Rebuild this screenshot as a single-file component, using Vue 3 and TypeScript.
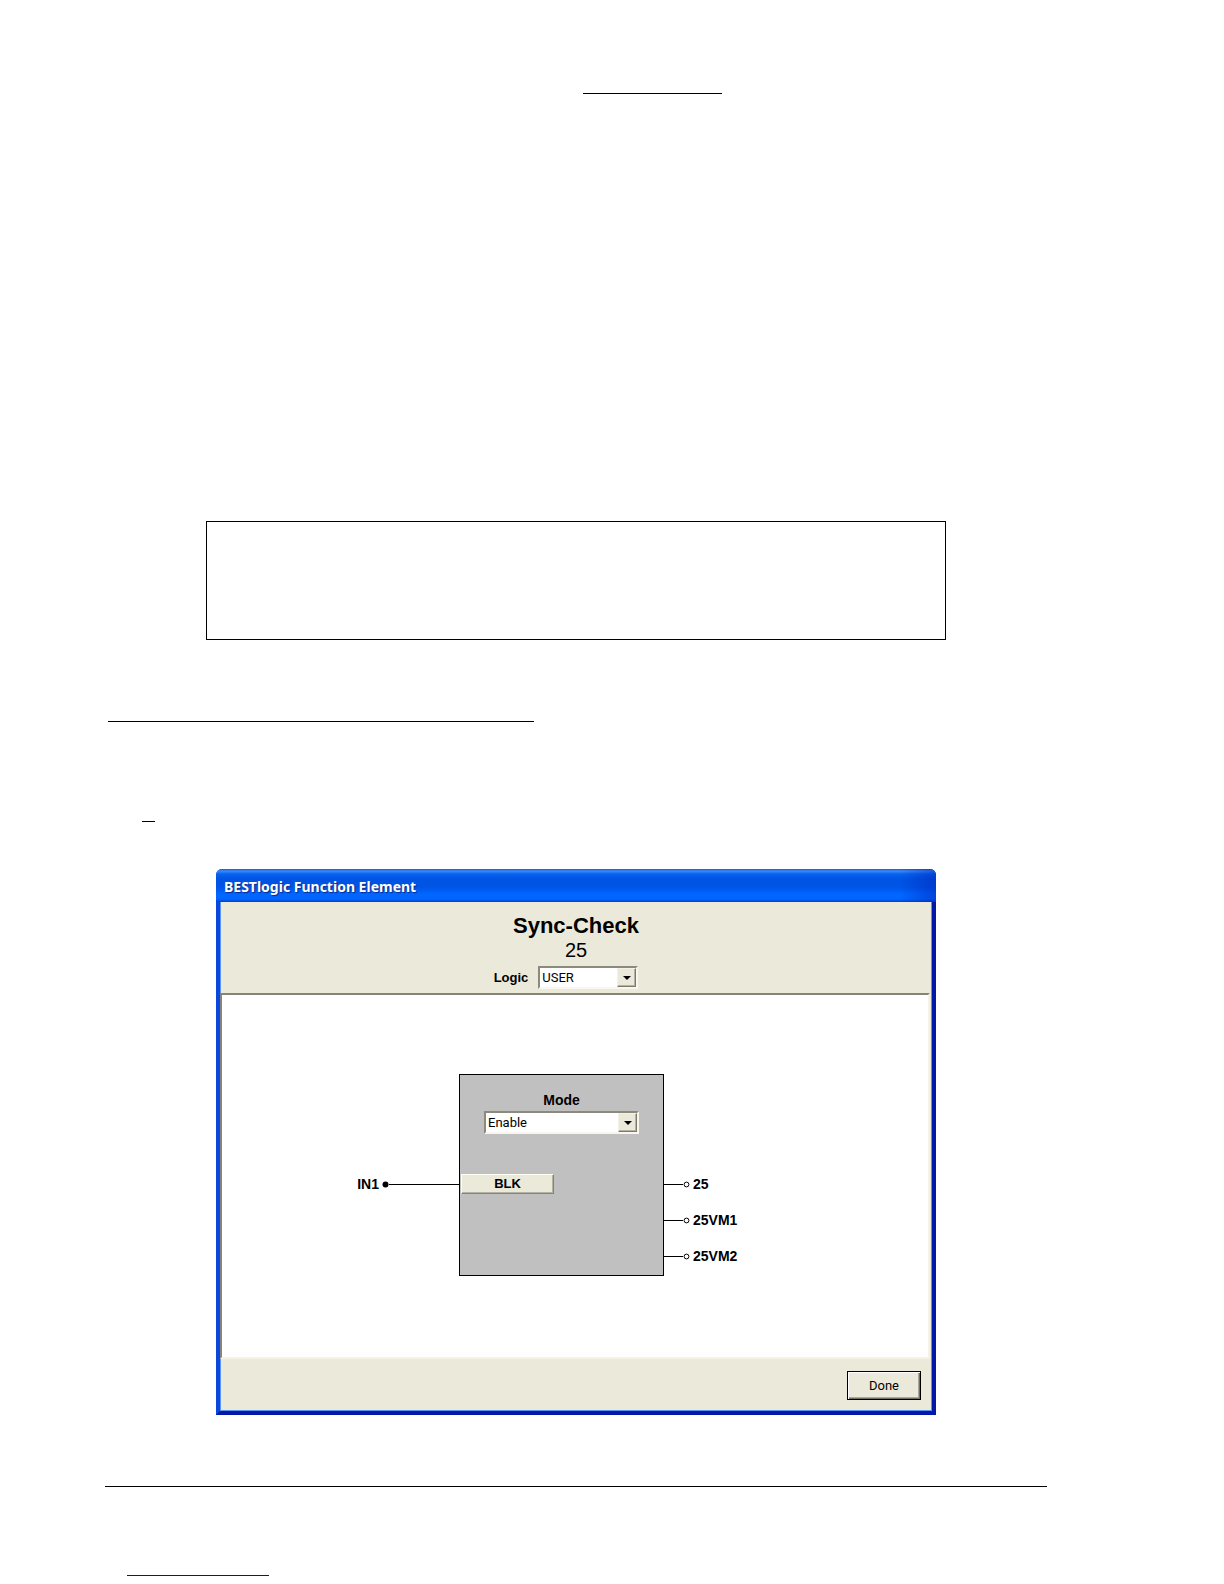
<script setup lang="ts">
import { ref } from 'vue'

const logic = ref<string>('USER')
const mode = ref<string>('Enable')
const logicOptions: string[] = ['USER', 'NONE']
const modeOptions: string[] = ['Enable', 'Disable']
const outputs: string[] = ['25', '25VM1', '25VM2']
</script>

<template>
  <main class="page">
    <div class="rule rule-top"></div>
    <div class="note"></div>
    <div class="rule rule-heading"></div>
    <div class="rule rule-mark"></div>

    <section class="window">
      <header class="titlebar">BESTlogic Function Element</header>
      <div class="head">
        <h1>Sync-Check</h1>
        <p class="number">25</p>
        <div class="logic-row">
          <label for="logic">Logic</label>
          <span class="combo combo-logic">
            <select id="logic" v-model="logic">
              <option v-for="o in logicOptions" :key="o">{{ o }}</option>
            </select>
            <span class="drop"><svg width="8" height="4" viewBox="0 0 8 4"><path d="M0 0H8L4 4Z" /></svg></span>
          </span>
        </div>
      </div>

      <div class="canvas">
        <div class="inputs">
          <span>IN1</span>
          <svg class="dot" width="7" height="7" viewBox="0 0 7 7"><circle cx="3.5" cy="3.5" r="3" /></svg>
          <i class="wire wire-in"></i>
        </div>
        <div class="block">
          <label for="mode">Mode</label>
          <span class="combo combo-mode">
            <select id="mode" v-model="mode">
              <option v-for="o in modeOptions" :key="o">{{ o }}</option>
            </select>
            <span class="drop"><svg width="8" height="4" viewBox="0 0 8 4"><path d="M0 0H8L4 4Z" /></svg></span>
          </span>
          <button type="button" class="blk">BLK</button>
        </div>
        <ul class="outputs">
          <li v-for="name in outputs" :key="name">
            <i class="wire wire-out"></i>
            <svg width="7" height="7" viewBox="0 0 7 7"><circle class="ring" cx="3.5" cy="3.5" r="2.4" /></svg>
            <span class="out-name">{{ name }}</span>
          </li>
        </ul>
      </div>

      <footer class="foot">
        <button type="button" class="done">Done</button>
      </footer>
    </section>

    <div class="rule rule-footer"></div>
    <div class="rule rule-link"></div>
  </main>
</template>

<style>
body {
  background: #fff;
}
</style>

<style scoped>
* {
  box-sizing: border-box;
}
.page {
  display: flex;
  flex-direction: column;
  padding: 93px 177px 8px 105px;
  color: #000;
  font: bold 13px/16px "Liberation Sans", Arial, sans-serif;
}
.rule {
  height: 1px;
  background: #000;
}
.rule-top {
  width: 139px;
  margin-left: 478px;
}
.note {
  height: 119px;
  margin: 427px 101px 0;
  border: 1px solid #000;
}
.rule-heading {
  width: 426px;
  margin: 81px 0 0 3px;
}
.rule-mark {
  width: 13px;
  margin: 99px 0 0 37px;
}
.rule-footer {
  margin-top: 71px;
}
.rule-link {
  width: 142px;
  margin: 88px 0 0 22px;
  background: #10108c;
}
.window {
  margin: 47px 111px 0;
  border: 4px solid;
  border-color: #0a50dc #0218a8 #0218a8 #0a48dc;
  border-top: 0;
  border-radius: 6px 6px 0 0;
  background: #ebe9d9;
  box-shadow: inset 1px -1px 0 #5a94f0, inset -1px 0 0 #5a94f0;
}
.titlebar {
  height: 33px;
  margin: 0 -4px;
  padding: 0 8px;
  border-radius: 6px 6px 0 0;
  background:
    linear-gradient(to right, transparent calc(100% - 36px), rgba(0, 30, 180, 0.45)),
    linear-gradient(#1658c8 0, #3a8cfa 2px, #0a62ee 5px, #0054e3 10px, #0054e6 18px, #0066ff 25px, #0066ff 30px, #0040cc 33px);
  color: #fff;
  font: bold 14px/36px "Noto Sans", sans-serif;
  text-shadow: 1px 1px 1px #0a2a8c;
}
.head {
  display: flex;
  flex-direction: column;
  align-items: center;
  height: 91px;
  padding-top: 11px;
}
h1 {
  margin: 0;
  font-size: 22px;
  line-height: 26px;
}
.number {
  margin: 0;
  font-size: 20px;
  font-weight: normal;
  line-height: 23px;
}
.logic-row {
  display: flex;
  align-items: center;
  gap: 10px;
  margin-top: 4px;
  padding-right: 20px;
}
.combo {
  display: flex;
  position: relative;
  height: 23px;
  border: 2px solid;
  border-color: #8c8a7c #f8f6ee #f8f6ee #8c8a7c;
  background: #fff;
}
.combo-logic {
  width: 100px;
}
.combo-mode {
  width: 155px;
}
select {
  flex: 1;
  min-width: 0;
  padding: 0 20px 0 2px;
  border: 0;
  background: none;
  appearance: none;
  color: #000;
  font: 13px/18px Roboto, sans-serif;
}
.drop {
  display: flex;
  position: absolute;
  top: 0;
  right: 0;
  bottom: 0;
  align-items: center;
  justify-content: center;
  width: 19px;
  border: 1px solid;
  border-color: #f4f2e6 #7c7a6c #7c7a6c #f4f2e6;
  background: #ebe9d9;
  box-shadow: inset -1px -1px 0 #b4b2a2;
  pointer-events: none;
}
.canvas {
  display: flex;
  height: 366px;
  padding: 79px 27px 0 0;
  border: 2px solid;
  border-color: #85837a #f6f2e4 #f6f2e4 #85837a;
  margin-right: 2px;
  background: #fff;
  font-size: 14px;
}
.inputs {
  display: flex;
  flex: 1;
  align-items: center;
  justify-content: flex-end;
  height: 16px;
  margin-top: 102px;
}
.dot {
  margin-left: 3px;
}
.wire {
  height: 1px;
  background: #000;
}
.wire-in {
  width: 70px;
}
.wire-out {
  width: 19px;
}
.block {
  display: flex;
  flex-direction: column;
  align-items: center;
  width: 205px;
  height: 202px;
  padding-top: 17px;
  border: 1px solid #000;
  background: #c0c0c0;
}
.block .combo {
  margin-top: 3px;
}
.blk {
  align-self: flex-start;
  width: 93px;
  height: 20px;
  margin: 40px 0 0 1px;
  padding: 0;
  border: 1px solid;
  border-color: #fffff4 #85837a #85837a #fffff4;
  background: #ebe9d9;
  box-shadow: inset -1px -1px 0 #b4b2a2;
  color: #000;
  font: bold 13px/16px "Liberation Sans", Arial, sans-serif;
}
.outputs {
  display: flex;
  flex: 1;
  flex-direction: column;
  gap: 20px;
  margin: 102px 0 0;
  padding: 0;
  list-style: none;
}
.outputs li {
  display: flex;
  align-items: center;
}
.out-name {
  margin-left: 3px;
}
.ring {
  fill: #fff;
  stroke: #000;
}
.foot {
  display: flex;
  justify-content: flex-end;
  height: 52px;
  padding: 12px 11px 0 0;
}
.done {
  width: 74px;
  height: 29px;
  padding: 0;
  border: 1px solid #000;
  background: #ebe9d9;
  box-shadow: inset 1px 1px 0 #fff, inset -1px -1px 0 #716f64, inset -2px -2px 0 #aca899;
  color: #000;
  font: 13px/16px Roboto, sans-serif;
}
</style>
